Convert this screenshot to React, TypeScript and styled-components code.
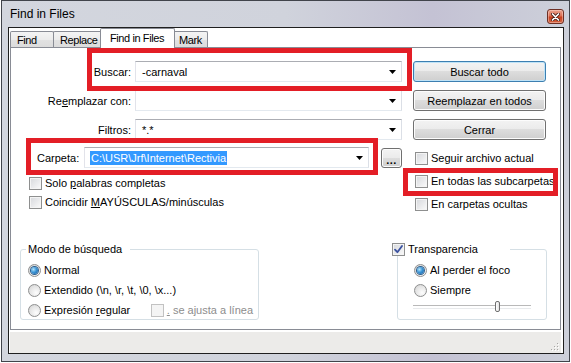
import React from "react";
import styled, { createGlobalStyle } from "styled-components";

const GlobalStyle = createGlobalStyle`
  html, body { margin: 0; padding: 0; background: #ffffff; }
  body {
    font-family: "Liberation Sans", Arial, sans-serif;
    font-size: 11px;
    color: #000;
  }
  * { box-sizing: border-box; }
`;

const Window = styled.div`
  width: 569px;
  height: 362px;
  margin: 0 1px;
  border: 1px solid #41444b;
  background: linear-gradient(90deg, #d3d6de 0%, #d0d3dc 50%, #c4c2d4 76%, #cdd0da 100%);
  display: flex;
  flex-direction: column;
  padding: 0 5px 7px 6px;
`;

const TitleBar = styled.div`
  height: 26px;
  flex: none;
  display: flex;
  align-items: flex-start;
  padding-left: 2px;
`;

const TitleText = styled.span`
  margin-top: 6px;
  font-size: 12px;
  line-height: 15px;
  color: #000;
`;

const CloseButton = styled.span`
  margin-left: auto;
  margin-top: 8px;
  width: 17px;
  height: 15px;
  border: 1px solid #6d2f24;
  border-radius: 3px;
  background: linear-gradient(180deg, #eba490 0%, #dc6f53 45%, #c8401f 55%, #d3633f 100%);
  box-shadow: inset 0 0 0 1px rgba(255, 220, 210, 0.45);
  display: flex;
  align-items: center;
  justify-content: center;
`;

const Client = styled.div`
  flex: 1;
  border: 1px solid #1f1f1f;
  background: #ffffff;
  display: flex;
  flex-direction: column;
`;

const TabStrip = styled.div`
  height: 19px;
  flex: none;
  display: flex;
  align-items: flex-end;
  padding-left: 1px;
  position: relative;
  z-index: 1;
`;

const Tab = styled.div<{ $active?: boolean; $w: number; $ml: number }>`
  width: ${(p) => p.$w}px;
  height: ${(p) => (p.$active ? 20 : 16)}px;
  margin-left: ${(p) => p.$ml}px;
  margin-bottom: ${(p) => (p.$active ? -1 : 0)}px;
  border: 1px solid #898c95;
  border-bottom: none;
  border-radius: 2px 2px 0 0;
  padding: ${(p) => (p.$active ? "3px 0 0 9px" : "2px 0 0 6px")};
  line-height: 13px;
  letter-spacing: -0.4px;
  white-space: nowrap;
  position: relative;
  z-index: ${(p) => (p.$active ? 2 : 1)};
  background: ${(p) =>
    p.$active
      ? "#ffffff"
      : "linear-gradient(180deg, #f4f4f4 0%, #ececec 50%, #e2e2e2 51%, #dcdcdc 100%)"};
`;

const Panel = styled.div`
  position: relative;
  height: 283px;
  flex: none;
  margin: 0 2px 0 1px;
  border: 1px solid #898c95;
  background: #ffffff;
  display: flex;
  flex-direction: column;
`;

const TopGrid = styled.div`
  margin-top: 13px;
  display: grid;
  grid-template-columns: 124px 267px 144px;
  grid-auto-rows: 21px;
  row-gap: 8px;
  align-items: center;
`;

const FieldLabel = styled.span`
  justify-self: end;
  padding-right: 4px;
  white-space: nowrap;
`;

const Combo = styled.div<{ $w: number }>`
  width: ${(p) => p.$w}px;
  height: 21px;
  display: flex;
  align-items: center;
  padding: 0 5px 0 6px;
  border: 1px solid;
  border-color: #abadb3 #dbdfe6 #e3e9ef #e2e3ea;
  background: #ffffff;
  white-space: nowrap;
`;

const ComboArrow = styled.svg`
  margin-left: auto;
  flex: none;
`;

const Selected = styled.span`
  background: #3399ff;
  color: #ffffff;
  margin-left: -1px;
  padding: 0 1px;
  line-height: 14px;
`;

const Button = styled.button<{ $default?: boolean; $w: number; $h: number }>`
  font: inherit;
  color: #000;
  width: ${(p) => p.$w}px;
  height: ${(p) => p.$h}px;
  padding: 0;
  justify-self: end;
  border: 1px solid ${(p) => (p.$default ? "#3c7fb1" : "#707070")};
  border-radius: 3px;
  background: linear-gradient(180deg, #f3f3f3 0%, #ebebeb 49%, #dddddd 50%, #cfcfcf 100%);
  box-shadow: inset 0 0 0 1px ${(p) => (p.$default ? "#bfe3f7" : "#fcfcfc")};
  display: flex;
  align-items: center;
  justify-content: center;
  white-space: nowrap;
`;

const MidSection = styled.div`
  margin-top: 7px;
  display: flex;
  align-items: flex-start;
`;

const LeftCol = styled.div`
  margin-left: 18px;
  display: flex;
  flex-direction: column;
`;

const FolderRow = styled.div`
  height: 21px;
  display: flex;
  align-items: center;
  padding-left: 8px;
`;

const FolderLabel = styled.span`
  width: 47px;
  white-space: nowrap;
`;

const CheckList = styled.div<{ $gap: number; $mt: number }>`
  margin-top: ${(p) => p.$mt}px;
  display: flex;
  flex-direction: column;
  gap: ${(p) => p.$gap}px;
`;

const RightCol = styled.div`
  margin-left: 13px;
  margin-top: 5px;
  display: flex;
  flex-direction: column;
  gap: 10px;
`;

const OptionRow = styled.div<{ $disabled?: boolean }>`
  height: 13px;
  display: flex;
  align-items: center;
  gap: 3px;
  white-space: nowrap;
  line-height: 13px;
  color: ${(p) => (p.$disabled ? "#8d8d8d" : "#000")};
`;

const Box = styled.span<{ $disabled?: boolean }>`
  width: 13px;
  height: 13px;
  flex: none;
  border: 1px solid ${(p) => (p.$disabled ? "#c2c2c2" : "#8e8f8f")};
  background: ${(p) =>
    p.$disabled
      ? "#f4f4f4"
      : "linear-gradient(135deg, #d6d8dc 0%, #e8e9eb 50%, #fbfbfb 100%)"};
  box-shadow: inset 0 0 0 1px #f4f4f4;
  display: flex;
  align-items: center;
  justify-content: center;
`;

const Radio = styled.span<{ $on?: boolean }>`
  width: 13px;
  height: 13px;
  flex: none;
  border-radius: 50%;
  border: 1px solid #8e8f8f;
  background: radial-gradient(circle at 65% 70%, #fdfdfd 0%, #e6e6e6 55%, #cfcfcf 100%);
  display: flex;
  align-items: center;
  justify-content: center;
  &::after {
    content: "";
    display: ${(p) => (p.$on ? "block" : "none")};
    width: 7px;
    height: 7px;
    border-radius: 50%;
    background: radial-gradient(circle at 35% 35%, #b5e4fb 0%, #3b95d6 45%, #175a9c 100%);
    box-shadow: 0 0 0 1px #2d5f8e;
  }
`;

const BrowseButton = styled(Button)`
  font-weight: bold;
  letter-spacing: 0.5px;
  margin-left: 12px;
  align-items: flex-end;
  padding-bottom: 3px;
  line-height: 8px;
`;

const GroupRow = styled.div`
  margin-top: 32px;
  display: flex;
  align-items: flex-start;
`;

const Group = styled.fieldset<{ $w: number; $ml: number }>`
  width: ${(p) => p.$w}px;
  height: 77px;
  margin: 0 0 0 ${(p) => p.$ml}px;
  padding: 0 5px;
  min-width: 0;
  border: 1px solid #d5dfe5;
  border-radius: 3px;
  font: inherit;
`;

const Legend = styled.legend<{ $ml?: number; $w?: number }>`
  padding: 0 8px 0 2px;
  margin-left: ${(p) => p.$ml ?? 0}px;
  ${(p) => (p.$w ? `width: ${p.$w}px;` : "")}
  line-height: 13px;
  height: 13px;
  display: flex;
  align-items: center;
  gap: 3px;
  white-space: nowrap;
`;

const GroupBody = styled.div<{ $ml: number }>`
  margin: 8px 0 0 ${(p) => p.$ml}px;
  display: flex;
  flex-direction: column;
  gap: 7px;
`;

const RadioText = styled.span<{ $w?: number }>`
  ${(p) => (p.$w ? `width: ${p.$w}px;` : "")}
`;

const Slider = styled.div`
  position: relative;
  margin: -3px 0 0 -1px;
  width: 118px;
  height: 11px;
  &::before {
    content: "";
    position: absolute;
    left: 0;
    right: 0;
    top: 4px;
    height: 2px;
    border-top: 1px solid #b9b9b9;
    border-bottom: 1px solid #e8eaec;
  }
`;

const Thumb = styled.span`
  position: absolute;
  left: 82px;
  top: 0;
  width: 5px;
  height: 11px;
  border: 1px solid #6f6f6f;
  border-radius: 2px;
  background: linear-gradient(90deg, #ffffff, #e2e2e2);
`;

const StatusStrip = styled.div`
  height: 21px;
  flex: none;
  margin: 2px 2px 0 1px;
  background: #ecebe9;
  display: flex;
  align-items: flex-end;
  justify-content: flex-end;
  padding: 0 2px 2px 0;
`;

const Highlight = styled.div<{ $x: number; $y: number; $w: number; $h: number }>`
  position: absolute;
  left: ${(p) => p.$x}px;
  top: ${(p) => p.$y}px;
  width: ${(p) => p.$w}px;
  height: ${(p) => p.$h}px;
  border: 5px solid #e31e26;
  pointer-events: none;
`;

const Arrow = () => (
  <ComboArrow width="7" height="4" viewBox="0 0 7 4">
    <path d="M0 0h7L3.5 4z" fill="#000" />
  </ComboArrow>
);

const CheckMark = () => (
  <svg width="9" height="9" viewBox="0 0 9 9">
    <path d="M1 4.6 L3.4 7.2 L8 1" fill="none" stroke="#3b52a0" strokeWidth="1.8" strokeLinecap="round" strokeLinejoin="round" />
  </svg>
);

const CheckOption = ({
  label,
  checked,
  disabled,
}: {
  label: React.ReactNode;
  checked?: boolean;
  disabled?: boolean;
}) => (
  <OptionRow $disabled={disabled}>
    <Box $disabled={disabled}>{checked && <CheckMark />}</Box>
    <span>{label}</span>
  </OptionRow>
);

const RadioOption = ({
  label,
  on,
  w,
  children,
}: {
  label: React.ReactNode;
  on?: boolean;
  w?: number;
  children?: React.ReactNode;
}) => (
  <OptionRow>
    <Radio $on={on} />
    <RadioText $w={w}>{label}</RadioText>
    {children}
  </OptionRow>
);

const Grip = () => (
  <svg width="8" height="8" viewBox="0 0 8 8">
    {[
      [6, 0],
      [6, 3],
      [3, 3],
      [6, 6],
      [3, 6],
      [0, 6],
    ].map(([x, y]) => (
      <g key={`${x}-${y}`}>
        <rect x={x + 1} y={y + 1} width="1" height="1" fill="#ffffff" />
        <rect x={x} y={y} width="1" height="1" fill="#a7a6a4" />
      </g>
    ))}
  </svg>
);

export default function App() {
  return (
    <>
      <GlobalStyle />
      <Window>
        <TitleBar>
          <TitleText>Find in Files</TitleText>
          <CloseButton>
            <svg width="9" height="8" viewBox="0 0 9 8">
              <path d="M1.5 1 L7.5 7 M7.5 1 L1.5 7" stroke="#4a1d14" strokeWidth="3.2" strokeLinecap="round" />
              <path d="M1.5 1 L7.5 7 M7.5 1 L1.5 7" stroke="#ffffff" strokeWidth="1.7" strokeLinecap="round" />
            </svg>
          </CloseButton>
        </TitleBar>
        <Client>
          <TabStrip>
            <Tab $w={44} $ml={0}>Find</Tab>
            <Tab $w={50} $ml={-1}>Replace</Tab>
            <Tab $w={75} $ml={-3} $active>
              Find in Files
            </Tab>
            <Tab $w={36} $ml={-3}>Mark</Tab>
          </TabStrip>
          <Panel>
            <TopGrid>
              <FieldLabel>Buscar:</FieldLabel>
              <Combo $w={267}>
                <span>-carnaval</span>
                <Arrow />
              </Combo>
              <Button $default $w={133} $h={21}>
                Buscar todo
              </Button>

              <FieldLabel>
                Re<u>e</u>mplazar con:
              </FieldLabel>
              <Combo $w={267}>
                <span />
                <Arrow />
              </Combo>
              <Button $w={133} $h={21}>
                Reemplazar en todos
              </Button>

              <FieldLabel>Filtros:</FieldLabel>
              <Combo $w={267}>
                <span>*.*</span>
                <Arrow />
              </Combo>
              <Button $w={133} $h={21}>
                Cerrar
              </Button>
            </TopGrid>

            <MidSection>
              <LeftCol>
                <FolderRow>
                  <FolderLabel>Carpeta:</FolderLabel>
                  <Combo $w={285}>
                    <Selected>C:\USR\Jrf\Internet\Rectivia</Selected>
                    <Arrow />
                  </Combo>
                  <BrowseButton $w={21} $h={20}>
                    ...
                  </BrowseButton>
                </FolderRow>
                <CheckList $gap={6} $mt={9}>
                  <CheckOption
                    label={
                      <>
                        Solo <u>p</u>alabras completas
                      </>
                    }
                  />
                  <CheckOption
                    label={
                      <>
                        Coincidir <u>M</u>AYÚSCULAS/minúsculas
                      </>
                    }
                  />
                </CheckList>
              </LeftCol>
              <RightCol>
                <CheckOption label="Seguir archivo actual" />
                <CheckOption label="En todas las subcarpetas" />
                <CheckOption label="En carpetas ocultas" />
              </RightCol>
            </MidSection>

            <GroupRow>
              <Group $w={239} $ml={9}>
                <Legend>Modo de búsqueda</Legend>
                <GroupBody $ml={2}>
                  <RadioOption label="Normal" on />
                  <RadioOption label="Extendido (\n, \r, \t, \0, \x...)" />
                  <RadioOption
                    w={104}
                    label={
                      <>
                        Expresión <u>r</u>egular
                      </>
                    }
                  >
                    <CheckOption
                      disabled
                      label={
                        <>
                          <u>.</u> se ajusta a línea
                        </>
                      }
                    />
                  </RadioOption>
                </GroupBody>
              </Group>
              <Group $w={150} $ml={138}>
                <Legend $ml={-13} $w={120}>
                  <Box>
                    <CheckMark />
                  </Box>
                  <span>Transparencia</span>
                </Legend>
                <GroupBody $ml={11}>
                  <RadioOption label="Al perder el foco" on />
                  <RadioOption label="Siempre" />
                  <Slider>
                    <Thumb />
                  </Slider>
                </GroupBody>
              </Group>
            </GroupRow>

            <Highlight $x={76} $y={0} $w={325} $h={43} />
            <Highlight $x={15} $y={90} $w={352} $h={37} />
            <Highlight $x={392} $y={120} $w={155} $h={28} />
          </Panel>
          <StatusStrip>
            <Grip />
          </StatusStrip>
        </Client>
      </Window>
    </>
  );
}
